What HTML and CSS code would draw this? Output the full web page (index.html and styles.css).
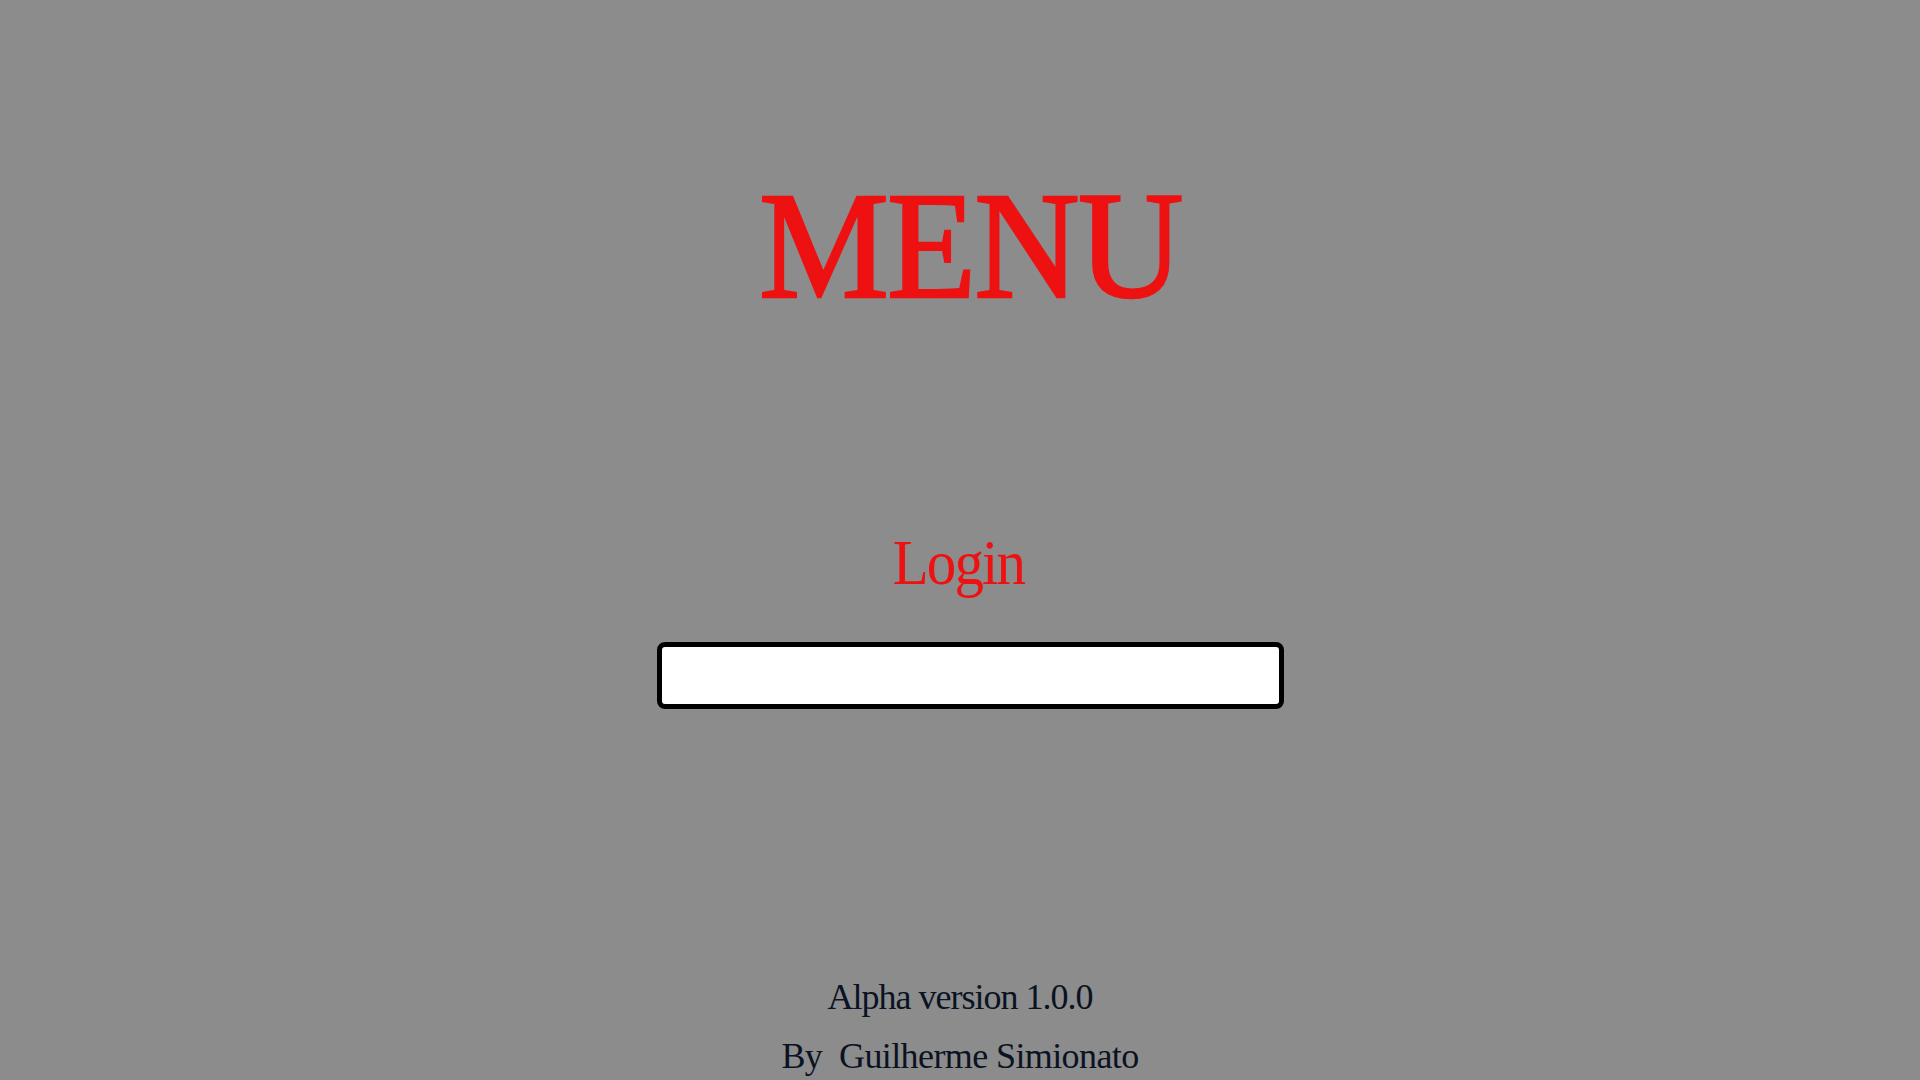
FILE: index.html
```html
<!DOCTYPE html>
<html>
<head>
<meta charset="utf-8">
<title>Menu</title>
<link rel="stylesheet" href="styles.css">
</head>
<body>
<main class="page">
  <h1 class="title">MENU</h1>
  <h2 class="login-label">Login</h2>
  <input class="login-input" type="text">
  <footer class="footer">
    <p class="footer-line">Alpha version 1.0.0</p>
    <p class="footer-line footer-author">By&nbsp; Guilherme Simionato</p>
  </footer>
</main>
</body>
</html>
```

FILE: styles.css
```css
html, body {
  margin: 0;
  padding: 0;
  height: 100%;
  background: #8c8c8c;
}
body {
  overflow: hidden;
  font-family: "Liberation Serif", "Times New Roman", serif;
}
.page {
  display: flex;
  flex-direction: column;
  align-items: center;
  padding-top: 169px;
}
.title {
  margin: 0 0 0 21px;
  font-size: 153px;
  line-height: 1;
  font-weight: normal;
  color: #ee1111;
  letter-spacing: -2px;
  transform: scaleX(0.955);
  -webkit-text-stroke: 2.5px #ee1111;
}
.login-label {
  margin: 209px 0 0 -4px;
  font-size: 64px;
  line-height: 1;
  font-weight: normal;
  color: #ee1111;
  letter-spacing: -2px;
  transform: scaleX(0.92);
}
.login-input {
  box-sizing: border-box;
  margin: 47px 0 0 21px;
  width: 627px;
  height: 67px;
  border: 5px solid #000;
  border-radius: 8px;
  background: #fff;
  outline: none;
}
.footer {
  margin-top: 270px;
  display: flex;
  flex-direction: column;
  align-items: center;
  gap: 23px;
}
.footer-line {
  margin: 0;
  font-size: 36px;
  line-height: 1;
  color: #0b1222;
  letter-spacing: -1px;
}
.footer-author {
  letter-spacing: -0.6px;
}
```
